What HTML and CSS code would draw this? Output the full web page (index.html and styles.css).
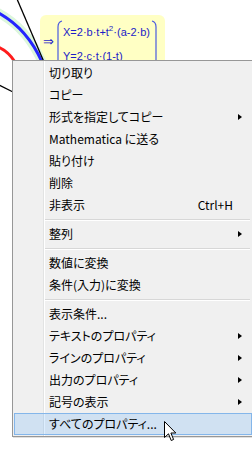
FILE: index.html
```html
<!DOCTYPE html>
<html lang="ja">
<head>
  <meta charset="UTF-8" />
  <title>コンテキストメニュー</title>
  <link rel="stylesheet" href="styles.css">
</head>
<body>
  <div class="canvas">
    <div class="result">
      <span class="implies">⇒</span>
      <svg class="brackets" width="104" height="60" viewBox="0 0 104 60">
        <path d="M6 4 Q2 5 2 10 L2 60" />
        <path d="M96 4 Q100 5 100 10 L100 60" />
      </svg>
      <div class="eq eq-x">X=2·b·t+t<sup>2</sup>·(a-2·b)</div>
      <div class="eq eq-y">Y=2·c·t·(1-t)</div>
    </div>

    <svg class="plot" width="252" height="120" viewBox="0 0 252 120">
      <path class="halo" d="M-3 12 C14 21 31 37 42 62" />
      <path class="curve-blue" d="M-3 12 C14 21 31 37 42 62" />
      <path class="curve-red" d="M-2 47 Q8 51 15 62" />
      <path class="line" d="M17 -1 L44 62" />
      <path class="line" d="M-1 85 L13 92" />
    </svg>
  </div>

  <ul class="menu">
    <li class="item">切り取り</li>
    <li class="item">コピー</li>
    <li class="item"><span class="label">形式を指定してコピー</span><span class="arrow"></span></li>
    <li class="item">Mathematica に送る</li>
    <li class="item">貼り付け</li>
    <li class="item">削除</li>
    <li class="item"><span class="label">非表示</span><span class="key">Ctrl+H</span></li>
    <li class="sep"></li>
    <li class="item"><span class="label">整列</span><span class="arrow"></span></li>
    <li class="sep"></li>
    <li class="item">数値に変換</li>
    <li class="item">条件(入力)に変換</li>
    <li class="sep"></li>
    <li class="item">表示条件...</li>
    <li class="item"><span class="label">テキストのプロパティ</span><span class="arrow"></span></li>
    <li class="item"><span class="label">ラインのプロパティ</span><span class="arrow"></span></li>
    <li class="item"><span class="label">出力のプロパティ</span><span class="arrow"></span></li>
    <li class="item"><span class="label">記号の表示</span><span class="arrow"></span></li>
    <li class="item active">すべてのプロパティ...</li>
  </ul>

  <svg class="pointer" width="13" height="21" viewBox="0 0 13 21">
    <path d="M0.5 0.5 L0.5 16.5 L4.5 12.8 L7.2 19.5 L9.6 18.5 L6.9 12 L11.8 12 Z" />
  </svg>
</body>
</html>
```

FILE: styles.css
```css
:root {
  --menu-bg: #f0f0f0;
  --menu-border: #979797;
  --gutter: #e2e3e3;
  --sep: #d7d7d7;
  --hover-bg: rgba(51, 153, 255, 0.165);
  --hover-border: #84b6ea;
  --eq-blue: #1c1cc8;
}

html, body {
  margin: 0;
  background: #fff;
}

body {
  width: 252px;
  height: 450px;
  overflow: hidden;
  position: relative;
  font-family: "Noto Sans CJK JP", "Noto Sans", sans-serif;
}

/* ----- グラフ領域 ----- */
.canvas {
  position: absolute;
  left: 0;
  top: 0;
  width: 252px;
  height: 120px;
}

.plot {
  position: absolute;
  left: 0;
  top: 0;
}

.plot path {
  fill: none;
}

.halo {
  stroke: #dcf6dc;
  stroke-width: 9;
}

.curve-blue {
  stroke: #2424ff;
  stroke-width: 3;
}

.curve-red {
  stroke: #ff1c1c;
  stroke-width: 3;
}

.line {
  stroke: #000;
  stroke-width: 1.3;
}

.result {
  position: absolute;
  left: 40px;
  top: 15px;
  width: 125px;
  height: 70px;
  background: #ffffc4;
  border-radius: 6px;
  color: var(--eq-blue);
  font-family: "Liberation Sans", Arial, sans-serif;
  font-size: 11px;
}

.implies {
  position: absolute;
  left: 3px;
  top: 19px;
  font-family: "DejaVu Sans", sans-serif;
  font-size: 13px;
}

.brackets {
  position: absolute;
  left: 16px;
  top: 2px;
}

.brackets path {
  fill: none;
  stroke: #4a5ae0;
  stroke-width: 1.2;
}

.eq {
  position: absolute;
  left: 23px;
  line-height: 14px;
  white-space: nowrap;
}

.eq sup {
  font-size: 8px;
  line-height: 0;
}

.eq-x {
  top: 10px;
}

.eq-y {
  top: 34px;
}

/* ----- コンテキストメニュー ----- */
.menu {
  position: absolute;
  left: 12px;
  top: 60px;
  width: 238px;
  margin: 0;
  padding: 1px 1px;
  list-style: none;
  background-color: var(--menu-bg);
  background-image: linear-gradient(to right,
    transparent 30px, var(--gutter) 30px, var(--gutter) 31px,
    #fff 31px, #fff 32px, transparent 32px);
  border: 1px solid var(--menu-border);
  box-shadow: 1px 1px 0 rgba(0, 0, 0, 0.12);
  font-size: 12px;
  font-feature-settings: "palt";
  color: #000;
}

.item {
  display: flex;
  align-items: center;
  height: 22px;
  line-height: 22px;
  padding: 0 9px 0 34px;
  border: 1px solid transparent;
  box-sizing: border-box;
  white-space: nowrap;
}

.item .label {
  flex: 1;
}

.key {
  margin-right: 9px;
  font-feature-settings: normal;
}

.arrow {
  width: 0;
  height: 0;
  border-top: 3.5px solid transparent;
  border-bottom: 3.5px solid transparent;
  border-left: 4px solid #000;
}

.item.active {
  background: var(--hover-bg);
  border-color: var(--hover-border);
}

.sep {
  height: 7px;
  margin-left: 31px;
  margin-right: 2px;
  background: linear-gradient(to bottom,
    transparent 3px, var(--sep) 3px, var(--sep) 4px, #fff 4px, #fff 5px, transparent 5px);
}

.pointer {
  position: absolute;
  left: 164px;
  top: 421px;
}

.pointer path {
  fill: #fff;
  stroke: #000;
  stroke-width: 1;
  stroke-linejoin: miter;
}
```
